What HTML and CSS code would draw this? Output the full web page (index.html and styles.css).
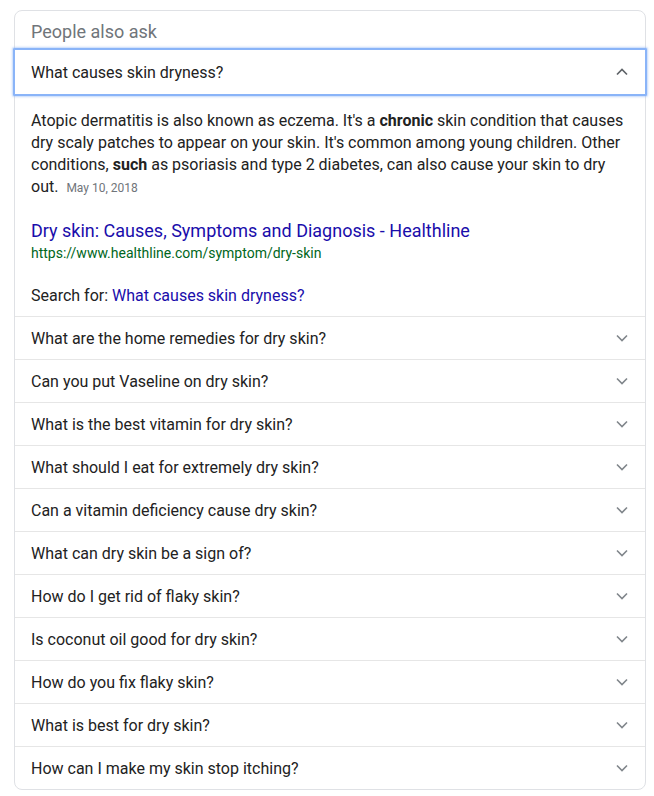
FILE: index.html
```html
<!DOCTYPE html>
<html>
<head>
<meta charset="utf-8">
<link rel="stylesheet" href="styles.css">
</head>
<body>
<div class="card">
  <div class="header">People also ask</div>
  <div class="q q-open">
    <span class="q-text">What causes skin dryness?</span>
    <svg class="chev" width="14" height="14" viewBox="0 0 14 14"><path d="M2 9.5 L7 4.5 L12 9.5" fill="none" stroke="#5f6368" stroke-width="1.7"/></svg>
  </div>
  <div class="answer">
    <p class="snippet">Atopic dermatitis is also known as eczema. It's a <b>chronic</b> skin condition that causes dry scaly patches to appear on your skin. It's common among young children. Other conditions, <b>such</b> as psoriasis and type 2 diabetes, can also cause your skin to dry out. <span class="date">May 10, 2018</span></p>
    <a class="title" href="#">Dry skin: Causes, Symptoms and Diagnosis - Healthline</a>
    <div class="url">https://www.healthline.com/symptom/dry-skin</div>
    <div class="search">Search for: <a href="#">What causes skin dryness?</a></div>
  </div>
  <div class="q"><span class="q-text">What are the home remedies for dry skin?</span><svg class="chev" width="14" height="14" viewBox="0 0 14 14"><path d="M2 4.5 L7 9.5 L12 4.5" fill="none" stroke="#80868b" stroke-width="1.6"/></svg></div>
  <div class="q"><span class="q-text">Can you put Vaseline on dry skin?</span><svg class="chev" width="14" height="14" viewBox="0 0 14 14"><path d="M2 4.5 L7 9.5 L12 4.5" fill="none" stroke="#80868b" stroke-width="1.6"/></svg></div>
  <div class="q"><span class="q-text">What is the best vitamin for dry skin?</span><svg class="chev" width="14" height="14" viewBox="0 0 14 14"><path d="M2 4.5 L7 9.5 L12 4.5" fill="none" stroke="#80868b" stroke-width="1.6"/></svg></div>
  <div class="q"><span class="q-text">What should I eat for extremely dry skin?</span><svg class="chev" width="14" height="14" viewBox="0 0 14 14"><path d="M2 4.5 L7 9.5 L12 4.5" fill="none" stroke="#80868b" stroke-width="1.6"/></svg></div>
  <div class="q"><span class="q-text">Can a vitamin deficiency cause dry skin?</span><svg class="chev" width="14" height="14" viewBox="0 0 14 14"><path d="M2 4.5 L7 9.5 L12 4.5" fill="none" stroke="#80868b" stroke-width="1.6"/></svg></div>
  <div class="q"><span class="q-text">What can dry skin be a sign of?</span><svg class="chev" width="14" height="14" viewBox="0 0 14 14"><path d="M2 4.5 L7 9.5 L12 4.5" fill="none" stroke="#80868b" stroke-width="1.6"/></svg></div>
  <div class="q"><span class="q-text">How do I get rid of flaky skin?</span><svg class="chev" width="14" height="14" viewBox="0 0 14 14"><path d="M2 4.5 L7 9.5 L12 4.5" fill="none" stroke="#80868b" stroke-width="1.6"/></svg></div>
  <div class="q"><span class="q-text">Is coconut oil good for dry skin?</span><svg class="chev" width="14" height="14" viewBox="0 0 14 14"><path d="M2 4.5 L7 9.5 L12 4.5" fill="none" stroke="#80868b" stroke-width="1.6"/></svg></div>
  <div class="q"><span class="q-text">How do you fix flaky skin?</span><svg class="chev" width="14" height="14" viewBox="0 0 14 14"><path d="M2 4.5 L7 9.5 L12 4.5" fill="none" stroke="#80868b" stroke-width="1.6"/></svg></div>
  <div class="q"><span class="q-text">What is best for dry skin?</span><svg class="chev" width="14" height="14" viewBox="0 0 14 14"><path d="M2 4.5 L7 9.5 L12 4.5" fill="none" stroke="#80868b" stroke-width="1.6"/></svg></div>
  <div class="q"><span class="q-text">How can I make my skin stop itching?</span><svg class="chev" width="14" height="14" viewBox="0 0 14 14"><path d="M2 4.5 L7 9.5 L12 4.5" fill="none" stroke="#80868b" stroke-width="1.6"/></svg></div>
</div>
</body>
</html>
```
FILE: styles.css
```css
html, body {
  margin: 0;
  padding: 0;
  background: #fff;
}
body {
  font-family: Roboto, "Liberation Sans", Arial, sans-serif;
  color: #222;
  padding: 10px 8px 0 14px;
}
.card {
  width: 630px;
  border: 1px solid #dfe1e5;
  border-radius: 8px;
  box-sizing: content-box;
}
.header {
  height: 37px;
  padding-left: 16px;
  font-size: 18px;
  line-height: 42px;
  color: #70757a;
}
.q {
  display: flex;
  align-items: center;
  justify-content: space-between;
  height: 42px;
  padding: 0 16px;
  border-top: 1px solid #e6e6e6;
  font-size: 16px;
}
.q-open {
  height: 48px;
  border-top: none;
  margin: 0 -2px;
  padding: 0 18px;
  box-shadow: 0 0 0 2px #8ab4f8 inset, 0 0 2px 1px rgba(138, 180, 248, 0.5);
  border-radius: 1px;
}
.answer {
  padding: 14px 16px 9px;
}
.snippet {
  margin: 0;
  font-size: 16px;
  line-height: 22px;
}
.snippet b {
  font-weight: 700;
}
.date {
  font-size: 12px;
  color: #70757a;
  margin-left: 4px;
}
.title {
  display: block;
  margin-top: 20px;
  font-size: 18px;
  line-height: 24px;
  color: #1a0dab;
  text-decoration: none;
}
.url {
  font-size: 14px;
  line-height: 20px;
  color: #006621;
}
.search {
  margin-top: 22px;
  font-size: 16px;
  line-height: 22px;
}
.search a {
  color: #1a0dab;
  text-decoration: none;
}
```
